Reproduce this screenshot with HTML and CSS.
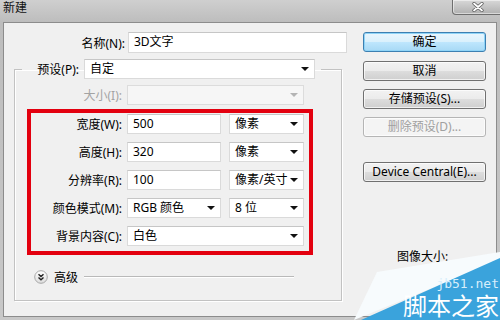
FILE: index.html
```html
<!DOCTYPE html>
<html lang="zh-CN">
<head>
    <meta charset="UTF-8">
    <meta name="viewport" content="width=device-width, initial-scale=1.0">
    <title>新建</title>
    <link rel="stylesheet" href="styles.css">
</head>
<body>
    <div class="window">
        <!-- Title bar -->
        <div class="titlebar">
            <span class="title">新建</span>
            <div class="close-btn">
                <svg width="16" height="10" viewBox="0 0 16 10">
                    <path d="M4 1.5 L12 8.5 M12 1.5 L4 8.5" stroke="#555" stroke-width="3.2" stroke-linecap="round"/>
                    <path d="M4 1.5 L12 8.5 M12 1.5 L4 8.5" stroke="#fff" stroke-width="1.8" stroke-linecap="round"/>
                </svg>
            </div>
        </div>

        <div class="frame">
            <div class="dialog">
                <!-- Left side: form -->
                <div class="form">
                    <div class="name-row">
                        <label class="name-label">名称(N):</label>
                        <div class="textbox name-box">3D文字</div>
                    </div>

                    <fieldset class="group">
                        <legend class="preset">
                            <label class="preset-label">预设(P):</label>
                            <div class="dropdown preset-box">自定<span class="arrow"></span></div>
                        </legend>

                        <div class="row size-row">
                            <label class="lbl disabled">大小(I):</label>
                            <div class="dropdown disabled-box size-box"><span class="arrow"></span></div>
                        </div>

                        <div class="highlight">
                            <div class="row">
                                <label class="lbl">宽度(W):</label>
                                <div class="textbox num-box">500</div>
                                <div class="dropdown unit-box">像素<span class="arrow"></span></div>
                            </div>
                            <div class="row">
                                <label class="lbl">高度(H):</label>
                                <div class="textbox num-box">320</div>
                                <div class="dropdown unit-box">像素<span class="arrow"></span></div>
                            </div>
                            <div class="row">
                                <label class="lbl">分辨率(R):</label>
                                <div class="textbox num-box">100</div>
                                <div class="dropdown unit-box">像素/英寸<span class="arrow"></span></div>
                            </div>
                            <div class="row">
                                <label class="lbl">颜色模式(M):</label>
                                <div class="dropdown num-box">RGB 颜色<span class="arrow"></span></div>
                                <div class="dropdown unit-box">8 位<span class="arrow"></span></div>
                            </div>
                            <div class="row">
                                <label class="lbl">背景内容(C):</label>
                                <div class="dropdown wide-box">白色<span class="arrow"></span></div>
                            </div>
                        </div>

                        <div class="advanced">
                            <svg class="adv-icon" width="14" height="14" viewBox="0 0 14 14">
                                <defs>
                                    <linearGradient id="advg" x1="0" y1="0" x2="0" y2="1">
                                        <stop offset="0" stop-color="#ffffff"/>
                                        <stop offset="1" stop-color="#dcdcdc"/>
                                    </linearGradient>
                                </defs>
                                <circle cx="7" cy="7" r="6.3" fill="url(#advg)" stroke="#a8a8a8"/>
                                <path d="M4.5 4.3 L7 6.6 L9.5 4.3 M4.5 7.4 L7 9.7 L9.5 7.4" fill="none" stroke="#222" stroke-width="1.4"/>
                            </svg>
                            <span class="adv-text">高级</span>
                            <div class="adv-line"></div>
                        </div>
                    </fieldset>
                </div>

                <!-- Right side: buttons -->
                <div class="side">
                    <button class="btn default">确定</button>
                    <button class="btn">取消</button>
                    <button class="btn">存储预设(S)...</button>
                    <button class="btn" disabled>删除预设(D)...</button>
                    <button class="btn device">Device Central(E)...</button>
                    <div class="image-size">图像大小:</div>
                </div>
            </div>
        </div>

        <!-- Watermark in the corner -->
        <div class="watermark">
            <svg width="170" height="75" viewBox="0 0 170 75">
                <polygon points="24,75 47,27 170,7 170,15" fill="#f7fbfd"/>
                <polygon points="31,75 170,13 170,75" fill="#3aa3dc"/>
            </svg>
            <span class="wm-url">jb51.net</span>
            <span class="wm-name">脚本之家</span>
        </div>
    </div>
</body>
</html>
```

FILE: styles.css
```css
/* Reset */
* {
    margin: 0;
    padding: 0;
    box-sizing: border-box;
}

body {
    width: 500px;
    height: 320px;
    overflow: hidden;
    background: #c4c4c4;
    font-family: "Noto Sans", "Noto Sans CJK SC", sans-serif;
    font-size: 12px;
    color: #000;
}

.window {
    position: relative;
    width: 500px;
    height: 320px;
    display: flex;
    flex-direction: column;
}

/* Title bar */
.titlebar {
    height: 22px;
    padding: 1px 0 0 3px;
    background: linear-gradient(#cfcfcf, #bdbdbd);
    line-height: 14px;
}

.title {
    font-size: 12px;
    color: #111;
}

.close-btn {
    position: absolute;
    top: 0;
    left: 452px;
    width: 52px;
    height: 15px;
    border: 1px solid #6e6e6e;
    border-top: none;
    border-radius: 0 0 4px 4px;
    background: linear-gradient(#d8d8d8, #b0b0b0);
    box-shadow: inset 0 0 0 1px rgba(255, 255, 255, 0.5);
    display: flex;
    justify-content: center;
    align-items: center;
}

/* Window frame */
.frame {
    flex: 1;
    padding: 0 3px 3px 3px;
    background: linear-gradient(#bdbdbd, #c8c8c8);
}

.dialog {
    height: 295px;
    background: #f0f0f0;
    border: 1px solid #8c8c8c;
    display: flex;
}

.form {
    width: 358px;
}

/* Name row */
.name-row {
    display: flex;
    align-items: center;
    margin-top: 9px;
}

.name-label {
    width: 121px;
    text-align: right;
    margin-right: 3px;
}

/* Text boxes and dropdowns */
.textbox,
.dropdown {
    height: 20px;
    background: #fff;
    border: 1px solid #dadada;
    border-top-color: #c6c6c6;
    line-height: 18px;
    padding-left: 5px;
    position: relative;
}

.name-box {
    width: 219px;
    height: 21px;
}

.arrow {
    position: absolute;
    right: 5px;
    top: 7px;
    width: 0;
    height: 0;
    border-left: 4px solid transparent;
    border-right: 4px solid transparent;
    border-top: 4px solid #111;
}

/* Group box */
.group {
    margin-left: 10px;
    width: 328px;
    border: 1px solid #c2c2c2;
    box-shadow: 1px 1px 0 #fff, inset 1px 1px 0 #fff;
    padding: 0 0 16px 0;
    margin-top: 6px;
}

.preset {
    margin-left: 7px;
    padding: 0 6px 0 0;
    display: flex;
    align-items: center;
}

.preset-label {
    width: 57px;
    text-align: right;
    margin-right: 5px;
}

.preset-box {
    width: 231px;
}

.row {
    display: flex;
    align-items: center;
}

.lbl {
    width: 107px;
    text-align: right;
    margin-right: 5px;
}

.size-row {
    margin-top: 6px;
}

.disabled {
    color: #a3a3a3;
}

.disabled-box {
    background: #f6f6f6;
    border-color: #dcdcdc;
}

.disabled-box .arrow {
    border-top-color: #b4b4b4;
}

.size-box {
    width: 177px;
}

/* Red highlight box */
.highlight {
    margin: 4px 0 0 12px;
    width: 286px;
    border: 4px solid #e3000f;
    padding: 1px 0 5px 0;
    display: flex;
    flex-direction: column;
    gap: 8px;
}

.highlight .lbl {
    width: 91px;
}

.num-box {
    width: 94px;
}

.unit-box {
    width: 75px;
    margin-left: 8px;
}

.wide-box {
    width: 177px;
}

/* Advanced toggle */
.advanced {
    display: flex;
    align-items: center;
    margin: 15px 0 0 19px;
    height: 14px;
}

.adv-text {
    margin-left: 6px;
}

.adv-line {
    margin-left: 6px;
    width: 210px;
    height: 2px;
    border-top: 1px solid #b9b9b9;
    border-bottom: 1px solid #fff;
}

/* Right-hand buttons */
.side {
    width: 123px;
    margin-left: 1px;
    display: flex;
    flex-direction: column;
    padding-top: 9px;
}

.btn {
    height: 20px;
    margin-bottom: 8px;
    font-family: "Noto Sans", "Noto Sans CJK SC", sans-serif;
    font-size: 12px;
    color: #000;
    border: 1px solid #707070;
    border-radius: 3px;
    background: linear-gradient(#f2f2f2 0%, #ebebeb 50%, #dddddd 51%, #cfcfcf 100%);
    box-shadow: inset 0 0 0 1px rgba(255, 255, 255, 0.7);
    line-height: 16px;
}

.btn.default {
    margin-bottom: 9px;
    border-color: #3c7fb1;
    background: linear-gradient(#eaf6fd 0%, #d9f0fc 50%, #bee6fd 51%, #a7d9f5 100%);
    box-shadow: inset 0 0 0 1px #8fd4f7;
}

.btn:disabled {
    color: #a0a0a0;
    border-color: #b5b5b5;
    background: #f4f4f4;
}

.btn.device {
    margin-top: 17px;
}

.image-size {
    margin: 57px 0 0 34px;
}

/* Watermark */
.watermark {
    position: absolute;
    right: 0;
    bottom: 0;
    width: 170px;
    height: 75px;
}

.watermark svg {
    display: block;
}

.wm-url {
    position: absolute;
    right: 1px;
    top: 32px;
    font-family: "DejaVu Sans Mono", monospace;
    font-size: 13px;
    color: #d6eefb;
    line-height: 13px;
}

.wm-name {
    position: absolute;
    right: 1px;
    top: 48px;
    font-family: "Noto Sans CJK SC", sans-serif;
    font-size: 24px;
    line-height: 24px;
    color: #fff;
}
```
